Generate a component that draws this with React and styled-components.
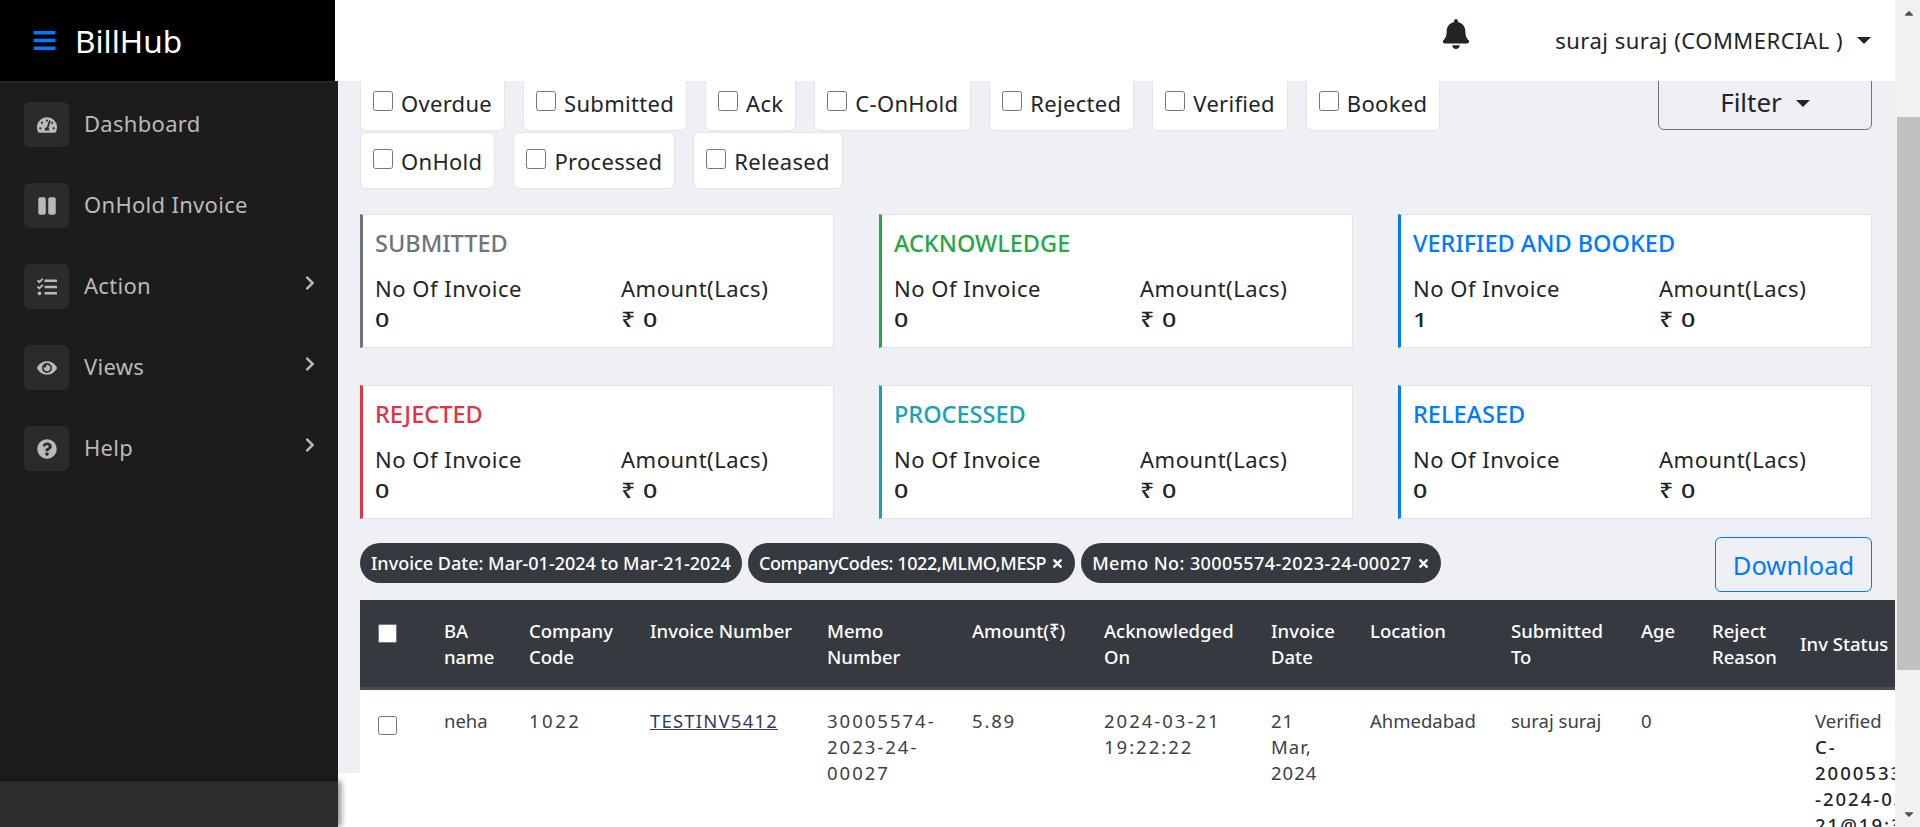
import React from 'react';
import styled, { createGlobalStyle } from 'styled-components';
import {
  FaBars,
  FaBell,
  FaCaretDown,
  FaCaretUp,
  FaChevronRight,
  FaEye,
  FaPause,
  FaQuestionCircle,
  FaTachometerAlt,
  FaTasks,
  FaTimes,
} from 'react-icons/fa';

const GlobalStyle = createGlobalStyle`
  html, body {
    margin: 0;
    height: 100%;
    overflow: hidden;
    background: #fff;
    font-family: "Noto Sans", "Liberation Sans", sans-serif;
    color: #212529;
  }
  * {
    box-sizing: border-box;
  }
`;

const Shell = styled.div`
  display: flex;
  height: 100vh;
`;

const Page = styled.div`
  flex: 1;
  min-width: 0;
  display: flex;
  flex-direction: column;
`;

const TopRow = styled.header`
  display: flex;
  height: 81px;
  flex-shrink: 0;
`;

const Brand = styled.div`
  width: 335px;
  background: #000;
  color: #fff;
  display: flex;
  align-items: center;
  padding-left: 32px;
  gap: 18px;
  font-size: 31.5px;
  svg {
    color: #007bff;
    font-size: 25px;
  }
`;

const TopNav = styled.div`
  flex: 1;
  background: #fff;
  display: flex;
  align-items: center;
  justify-content: flex-end;
  padding-right: 24px;
`;

const Bell = styled(FaBell)`
  font-size: 30px;
  margin-right: 84px;
  margin-top: -14px;
`;

const UserName = styled.span`
  font-size: 22px;
  letter-spacing: 0.5px;
  margin-top: -2px;
`;

const Caret = styled.span`
  display: inline-block;
  width: 0;
  height: 0;
  margin-left: ${(p) => p.$gap || 12}px;
  vertical-align: 0.2em;
  border-top: 7px solid #212529;
  border-left: 7px solid transparent;
  border-right: 7px solid transparent;
`;

const BodyRow = styled.div`
  flex: 1;
  min-height: 0;
  display: flex;
`;

const Sidebar = styled.aside`
  width: 338px;
  flex-shrink: 0;
  background: #1c1c1c;
  border-top: 2px solid #262626;
  display: flex;
  flex-direction: column;
  position: relative;
  z-index: 2;
`;

const NavList = styled.nav`
  flex: 1;
  display: flex;
  flex-direction: column;
  gap: 36px;
  padding: 19px 24px 0;
`;

const NavItem = styled.div`
  display: flex;
  align-items: center;
  height: 45px;
  color: #b9b9b9;
  font-size: 22px;
  letter-spacing: 0.3px;
`;

const NavIcon = styled.span`
  width: 45px;
  height: 45px;
  border-radius: 6px;
  background: #2b2b2b;
  display: flex;
  align-items: center;
  justify-content: center;
  margin-right: 15px;
  font-size: 20px;
`;

const NavLabel = styled.span`
  flex: 1;
  margin-top: -3px;
`;

const NavArrow = styled(FaChevronRight)`
  font-size: 16px;
  margin-right: -4px;
  margin-top: -8px;
`;

const SideFooter = styled.div`
  height: 46px;
  background: #2d2d2d;
  border-top: 1px solid #252525;
  box-shadow: 3px 0 6px rgba(0, 0, 0, 0.45);
`;

const Content = styled.main`
  flex: 1;
  min-width: 0;
  overflow: hidden;
  background: #fff;
`;

const Panel = styled.div`
  display: flow-root;
  height: 692px;
  background: #eff0f5;
  padding: 0 23px 0 22px;
`;

const FilterBar = styled.div`
  display: flex;
  justify-content: space-between;
  align-items: flex-start;
  margin-top: -7px;
`;

const ChipWrap = styled.div`
  display: flex;
  flex-wrap: wrap;
  width: 1200px;
  row-gap: 1px;
`;

const Chip = styled.label`
  display: flex;
  align-items: flex-start;
  height: 57px;
  padding: 13px 12px 0 12px;
  margin-right: 18px;
  background: #fff;
  border: 1px solid #e4e5ea;
  border-radius: 6px;
  font-size: 22px;
  letter-spacing: 0.3px;
  line-height: 30px;
  input {
    width: 20px;
    height: 20px;
    margin: 3px 8px 0 0;
  }
`;

const FilterButton = styled.button`
  width: 214px;
  height: 56px;
  border: 1px solid #6c757d;
  border-radius: 6px;
  background: transparent;
  font: inherit;
  font-size: 26px;
  color: #212529;
`;

const CardGrid = styled.div`
  display: grid;
  grid-template-columns: repeat(3, 474px);
  column-gap: 45px;
  row-gap: 37px;
  margin-top: 25px;
`;

const StatCard = styled.div`
  height: 134px;
  background: #fff;
  border: 1px solid #e2e3e8;
  border-left: 3px solid ${(p) => p.$color};
  padding: 13px 12px 0;
`;

const StatTitle = styled.div`
  font-size: 23.5px;
  line-height: 30px;
  font-weight: 500;
  color: ${(p) => p.$color};
`;

const StatColumns = styled.div`
  display: grid;
  grid-template-columns: 246px 1fr;
  margin-top: 15px;
  font-size: 22px;
  letter-spacing: 0.5px;
  line-height: 31px;
`;

const StatValue = styled.div`
  font-size: 20px;
  font-weight: 500;
  transform: scaleX(1.25);
  transform-origin: left center;
`;

const TagRow = styled.div`
  display: flex;
  justify-content: space-between;
  align-items: flex-start;
  margin-top: 18px;
  height: 63px;
`;

const Tags = styled.div`
  display: flex;
  gap: 6px;
  margin-top: 6px;
`;

const Tag = styled.span`
  display: flex;
  align-items: center;
  gap: 5px;
  height: 40px;
  padding: 0 11px;
  border-radius: 20px;
  background: #343a40;
  color: #fff;
  font-size: 18px;
  font-weight: 500;
  letter-spacing: ${(p) => p.$spacing || 0}px;
  svg {
    font-size: 13px;
  }
`;

const DownloadButton = styled.button`
  width: 157px;
  height: 55px;
  border: 1px solid #007bff;
  border-radius: 6px;
  background: transparent;
  color: #007bff;
  font: inherit;
  font-size: 25.5px;
`;

const TableClip = styled.div`
  overflow: hidden;
  margin-right: -23px;
  background: #fff;
`;

const Table = styled.table`
  table-layout: fixed;
  width: 1535px;
  border-collapse: collapse;
  font-size: 18.5px;
  line-height: 26px;
`;

const HeadCell = styled.th`
  background: #343a40;
  color: #fff;
  font-weight: 500;
  text-align: left;
  padding: 18px 12px 17px;
  vertical-align: ${(p) => (p.$middle ? 'middle' : 'top')};
  border-bottom: 3px solid #454d55;
  white-space: ${(p) => (p.$nowrap ? 'nowrap' : 'normal')};
  input {
    width: 19px;
    height: 19px;
    margin: 6px 0 0 6px;
  }
`;

const BodyCell = styled.td`
  padding: 18px 12px 12px;
  vertical-align: top;
  color: #3b4148;
  letter-spacing: ${(p) => p.$spacing || 0}px;
  input {
    width: 19px;
    height: 19px;
    margin: 8px 0 0 6px;
  }
`;

const InvoiceLink = styled.a`
  color: #343a60;
  text-decoration: underline;
  letter-spacing: 1.2px;
`;

const StatusCell = styled(BodyCell)`
  padding-left: 27px;
  white-space: nowrap;
  b {
    display: block;
    font-weight: 500;
    color: #212529;
    letter-spacing: 2px;
  }
`;

const ScrollTrack = styled.div`
  width: 25px;
  flex-shrink: 0;
  height: 100vh;
  background: #f1f1f1;
  padding-left: 2px;
  display: flex;
  flex-direction: column;
  align-items: center;
  color: #505050;
  font-size: 14px;
`;

const ScrollArrow = styled.div`
  height: 26px;
  display: flex;
  align-items: center;
  margin-top: ${(p) => (p.$bottom ? 'auto' : 0)};
`;

const ScrollThumb = styled.div`
  width: 100%;
  height: 553px;
  margin-top: 91px;
  background: #c1c1c1;
`;

const navItems = [
  { label: 'Dashboard', icon: <FaTachometerAlt /> },
  { label: 'OnHold Invoice', icon: <FaPause /> },
  { label: 'Action', icon: <FaTasks />, more: true },
  { label: 'Views', icon: <FaEye />, more: true },
  { label: 'Help', icon: <FaQuestionCircle />, more: true },
];

const statuses = ['Overdue', 'Submitted', 'Ack', 'C-OnHold', 'Rejected', 'Verified', 'Booked', 'OnHold', 'Processed', 'Released'];

const stats = [
  { title: 'SUBMITTED', color: '#6c757d', count: 0 },
  { title: 'ACKNOWLEDGE', color: '#28a745', count: 0 },
  { title: 'VERIFIED AND BOOKED', color: '#007bff', count: 1 },
  { title: 'REJECTED', color: '#dc3545', count: 0 },
  { title: 'PROCESSED', color: '#17a2b8', count: 0 },
  { title: 'RELEASED', color: '#007bff', count: 0 },
];

const columns = [
  { label: 'BA name', width: 85 },
  { label: 'Company Code', width: 121 },
  { label: 'Invoice Number', width: 177 },
  { label: 'Memo Number', width: 145 },
  { label: 'Amount(₹)', width: 132 },
  { label: 'Acknowledged On', width: 167 },
  { label: 'Invoice Date', width: 99 },
  { label: 'Location', width: 141 },
  { label: 'Submitted To', width: 130 },
  { label: 'Age', width: 71 },
  { label: 'Reject Reason', width: 88 },
];

const App = () => {
  return (
    <Shell>
      <GlobalStyle />
      <Page>
        <TopRow>
          <Brand>
            <FaBars />
            BillHub
          </Brand>
          <TopNav>
            <Bell />
            <UserName>suraj suraj (COMMERCIAL )</UserName>
            <Caret $gap={14} />
          </TopNav>
        </TopRow>
        <BodyRow>
          <Sidebar>
            <NavList>
              {navItems.map((item) => (
                <NavItem key={item.label}>
                  <NavIcon>{item.icon}</NavIcon>
                  <NavLabel>{item.label}</NavLabel>
                  {item.more && <NavArrow />}
                </NavItem>
              ))}
            </NavList>
            <SideFooter />
          </Sidebar>
          <Content>
            <Panel>
              <FilterBar>
                <ChipWrap>
                  {statuses.map((name) => (
                    <Chip key={name}>
                      <input type="checkbox" />
                      {name}
                    </Chip>
                  ))}
                </ChipWrap>
                <FilterButton>
                  Filter
                  <Caret $gap={14} />
                </FilterButton>
              </FilterBar>

              <CardGrid>
                {stats.map((s) => (
                  <StatCard key={s.title} $color={s.color}>
                    <StatTitle $color={s.color}>{s.title}</StatTitle>
                    <StatColumns>
                      <div>
                        No Of Invoice
                        <StatValue>{s.count}</StatValue>
                      </div>
                      <div>
                        Amount(Lacs)
                        <StatValue>₹ 0</StatValue>
                      </div>
                    </StatColumns>
                  </StatCard>
                ))}
              </CardGrid>

              <TagRow>
                <Tags>
                  <Tag>Invoice Date: Mar-01-2024 to Mar-21-2024</Tag>
                  <Tag $spacing={-0.4}>
                    CompanyCodes: 1022,MLMO,MESP
                    <FaTimes />
                  </Tag>
                  <Tag $spacing={0.4}>
                    Memo No: 30005574-2023-24-00027
                    <FaTimes />
                  </Tag>
                </Tags>
                <DownloadButton>Download</DownloadButton>
              </TagRow>

              <TableClip>
                <Table>
                  <colgroup>
                    <col style={{ width: 72 }} />
                    {columns.map((c) => (
                      <col key={c.label} style={{ width: c.width }} />
                    ))}
                    <col />
                  </colgroup>
                  <thead>
                    <tr>
                      <HeadCell>
                        <input type="checkbox" />
                      </HeadCell>
                      {columns.map((c) => (
                        <HeadCell key={c.label}>{c.label}</HeadCell>
                      ))}
                      <HeadCell $middle $nowrap>
                        Inv Status
                      </HeadCell>
                    </tr>
                  </thead>
                  <tbody>
                    <tr>
                      <BodyCell>
                        <input type="checkbox" />
                      </BodyCell>
                      <BodyCell>neha</BodyCell>
                      <BodyCell $spacing={2.5}>1022</BodyCell>
                      <BodyCell>
                        <InvoiceLink href="#">TESTINV5412</InvoiceLink>
                      </BodyCell>
                      <BodyCell $spacing={2}>30005574-2023-24-00027</BodyCell>
                      <BodyCell $spacing={1.8}>5.89</BodyCell>
                      <BodyCell $spacing={2}>2024-03-21 19:22:22</BodyCell>
                      <BodyCell $spacing={1}>
                        21
                        <br />
                        Mar,
                        <br />
                        2024
                      </BodyCell>
                      <BodyCell>Ahmedabad</BodyCell>
                      <BodyCell>suraj suraj</BodyCell>
                      <BodyCell>0</BodyCell>
                      <BodyCell />
                      <StatusCell>
                        Verified
                        <b>C-</b>
                        <b>2000533</b>
                        <b>-2024-03-</b>
                        <b>21@19:32</b>
                      </StatusCell>
                    </tr>
                  </tbody>
                </Table>
              </TableClip>
            </Panel>
          </Content>
        </BodyRow>
      </Page>
      <ScrollTrack>
        <ScrollArrow>
          <FaCaretUp />
        </ScrollArrow>
        <ScrollThumb />
        <ScrollArrow $bottom>
          <FaCaretDown />
        </ScrollArrow>
      </ScrollTrack>
    </Shell>
  );
};

export default App;
